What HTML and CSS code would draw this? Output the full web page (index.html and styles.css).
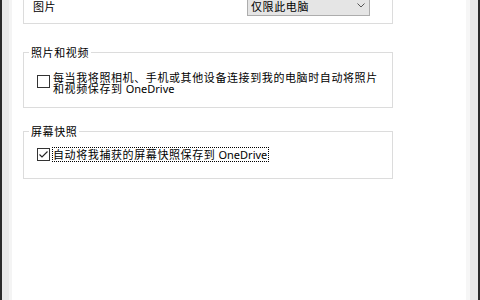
FILE: index.html
```html
<!DOCTYPE html>
<html lang="zh-CN">
<head>
<meta charset="utf-8">
<link rel="stylesheet" href="styles.css">
</head>
<body>
<div class="window">
  <div class="panel">
    <fieldset class="group group-first">
      <div class="row">
        <span class="label">图片</span>
        <div class="select">
          <span class="select-text">仅限此电脑</span>
          <svg class="chevron" width="8" height="5" viewBox="0 0 8 5"><path d="M0.5 0.5 L4 4 L7.5 0.5" fill="none" stroke="#555" stroke-width="1"/></svg>
        </div>
      </div>
    </fieldset>

    <fieldset class="group group-photos">
      <legend>照片和视频</legend>
      <div class="inner inner-photos">
        <div class="check">
          <span class="box"></span>
          <span class="text">每当我将照相机、手机或其他设备连接到我的电脑时自动将照片<br>和视频保存到 <span class="latin">OneDrive</span></span>
        </div>
      </div>
    </fieldset>

    <fieldset class="group group-shots">
      <legend>屏幕快照</legend>
      <div class="inner inner-shots">
        <div class="check">
          <span class="box box-checked">
            <svg width="11" height="11" viewBox="0 0 11 11"><path d="M1.5 5.5 L4 8 L9.5 2.5" fill="none" stroke="#222" stroke-width="1.1"/></svg>
          </span>
          <span class="text text-focus">自动将我捕获的屏幕快照保存到 <span class="latin">OneDrive</span></span>
        </div>
      </div>
    </fieldset>
  </div>
</div>
</body>
</html>
```

FILE: styles.css
```css
html, body {
  margin: 0;
  padding: 0;
  background: #ffffff;
}

body {
  font-family: "Noto Sans CJK SC", "Noto Sans", sans-serif;
  font-size: 11px;
  letter-spacing: 0.6px;
  color: #000;
}

.latin {
  font-family: "Noto Sans", sans-serif;
  font-size: 11px;
  letter-spacing: 0;
}

.window {
  display: flex;
  height: 300px;
  box-sizing: border-box;
  border-left: 2px solid #2b2b2b;
  border-right: 2px solid #2b2b2b;
  background: #e9e9e9;
  padding: 0 8px 0 7px;
  overflow: hidden;
}

.panel {
  flex: 1;
  background: #ffffff;
  border-left: 3px solid #f4f4f4;
  border-right: 4px solid #f6f6f6;
  padding-left: 11px;
}

.group {
  width: 370px;
  box-sizing: border-box;
  margin: 0;
  padding: 0;
  border: 1px solid #dcdcdc;
  min-width: 0;
}

.group legend {
  margin-left: 5px;
  padding: 0 2px;
  line-height: 14px;
}

.group-first {
  margin-top: -14px;
  padding: 8px 0 7px 9px;
}

.row {
  display: flex;
  align-items: center;
  height: 21px;
}

.label {
  width: 214px;
  line-height: 14px;
}

.select {
  width: 123px;
  height: 21px;
  box-sizing: border-box;
  border: 1px solid #adadad;
  background: #e5e5e5;
  display: flex;
  align-items: center;
  justify-content: space-between;
  padding: 0 4px 0 3px;
}

.select-text {
  line-height: 14px;
}

.chevron {
  display: block;
}

.group-photos {
  margin-top: 21px;
}

.group-shots {
  margin-top: 16px;
}

.inner {
  padding-left: 13px;
}

.inner-photos {
  padding-top: 13px;
  padding-bottom: 13px;
}

.inner-shots {
  padding-top: 9px;
  padding-bottom: 16px;
}

.check {
  display: flex;
  align-items: flex-start;
}

.box {
  flex: none;
  width: 13px;
  height: 13px;
  box-sizing: border-box;
  border: 1px solid #333;
  background: #fff;
  margin-top: 3px;
  margin-right: 2px;
  display: flex;
  align-items: center;
  justify-content: center;
}

.box-checked {
  margin-top: 1px;
}

.box svg {
  display: block;
}

.text {
  line-height: 11px;
  padding-left: 1px;
}

.text-focus {
  line-height: 13px;
  border: 1px dotted #000;
  padding: 0 1px 0 0;
}
```
